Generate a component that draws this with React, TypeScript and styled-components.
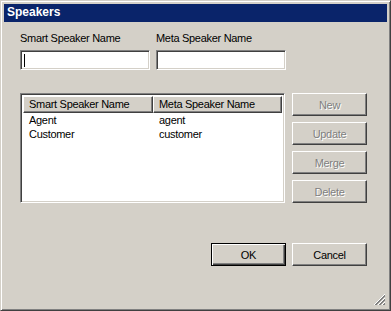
import styled, { createGlobalStyle } from 'styled-components'

const FACE = '#d4d0c8'
const SHADOW = '#808080'
const DARK = '#404040'

interface Speaker {
  smart: string
  meta: string
}

const SPEAKERS: Speaker[] = [
  { smart: 'Agent', meta: 'agent' },
  { smart: 'Customer', meta: 'customer' },
]

const SIDE_ACTIONS = ['New', 'Update', 'Merge', 'Delete']

const GlobalStyle = createGlobalStyle`
  html, body {
    margin: 0;
    padding: 0;
    background: ${FACE};
  }
  * {
    box-sizing: border-box;
  }
`

function ResizeGrip() {
  return (
    <Grip width="12" height="12" viewBox="0 0 12 12" shapeRendering="crispEdges">
      {[0, 4, 8].map((o) => (
        <g key={o}>
          <line x1={o + 1} y1="12" x2="12" y2={o + 1} stroke="#fff" strokeWidth="1" />
          <line x1={o + 2} y1="12" x2="12" y2={o + 2} stroke={SHADOW} strokeWidth="1" />
          <line x1={o + 3} y1="12" x2="12" y2={o + 3} stroke={SHADOW} strokeWidth="1" />
        </g>
      ))}
    </Grip>
  )
}

function App() {
  return (
    <>
      <GlobalStyle />
      <Window>
        <TitleBar>Speakers</TitleBar>
        <Body>
          <FieldsRow>
            <Field>
              <FieldLabel htmlFor="smartName">Smart Speaker Name</FieldLabel>
              <TextBox id="smartName">
                <Caret />
              </TextBox>
            </Field>
            <Field>
              <FieldLabel htmlFor="metaName">Meta Speaker Name</FieldLabel>
              <TextBox id="metaName" />
            </Field>
          </FieldsRow>

          <ListRow>
            <ListView>
              <HeaderRow>
                <HeaderCell $width={130}>Smart Speaker Name</HeaderCell>
                <HeaderCell>Meta Speaker Name</HeaderCell>
              </HeaderRow>
              {SPEAKERS.map((s) => (
                <ItemRow key={s.smart}>
                  <ItemCell $width={130}>{s.smart}</ItemCell>
                  <ItemCell>{s.meta}</ItemCell>
                </ItemRow>
              ))}
            </ListView>
            <SideButtons>
              {SIDE_ACTIONS.map((a) => (
                <Button key={a} disabled>
                  {a}
                </Button>
              ))}
            </SideButtons>
          </ListRow>

          <DialogButtons>
            <Button $default>OK</Button>
            <Button>Cancel</Button>
          </DialogButtons>
        </Body>
        <ResizeGrip />
      </Window>
    </>
  )
}

export default App

const Window = styled.div`
  position: relative;
  width: 391px;
  height: 311px;
  display: flex;
  flex-direction: column;
  padding: 3px;
  background: ${FACE};
  border-top: 1px solid ${FACE};
  border-left: 1px solid ${FACE};
  border-right: 1px solid ${DARK};
  border-bottom: 1px solid ${DARK};
  box-shadow: inset 1px 1px #fff, inset -1px -1px ${SHADOW};
  font-family: 'Liberation Sans', Arial, sans-serif;
  font-size: 11px;
  letter-spacing: -0.3px;
  color: #000;
`

const TitleBar = styled.div`
  height: 18px;
  padding-left: 3px;
  background: #0a246a;
  color: #fff;
  font-weight: bold;
  font-size: 12px;
  letter-spacing: 0;
  line-height: 17px;
`

const Body = styled.div`
  flex: 1;
  display: flex;
  flex-direction: column;
  padding: 10px 20px 0 16px;
`

const FieldsRow = styled.div`
  display: flex;
  gap: 6px;
`

const Field = styled.div`
  display: flex;
  flex-direction: column;
  gap: 5px;
  width: 130px;
`

const FieldLabel = styled.label`
  line-height: 13px;
  height: 13px;
  white-space: nowrap;
`

const sunken = `
  background: #fff;
  border-top: 1px solid ${SHADOW};
  border-left: 1px solid ${SHADOW};
  border-right: 1px solid #fff;
  border-bottom: 1px solid #fff;
  box-shadow: inset 1px 1px ${DARK}, inset -1px -1px ${FACE};
`

const TextBox = styled.div`
  ${sunken}
  height: 20px;
  padding: 3px 0 0 3px;
`

const Caret = styled.span`
  display: block;
  width: 1px;
  height: 13px;
  background: #000;
`

const ListRow = styled.div`
  display: flex;
  gap: 7px;
  margin-top: 23px;
`

const ListView = styled.div`
  ${sunken}
  width: 265px;
  height: 110px;
  padding: 2px;
`

const HeaderRow = styled.div`
  display: flex;
  height: 17px;
`

const HeaderCell = styled.div<{ $width?: number }>`
  ${({ $width }) => ($width ? `width: ${$width}px;` : 'flex: 1;')}
  background: ${FACE};
  border-top: 1px solid #fff;
  border-left: 1px solid #fff;
  border-right: 1px solid ${DARK};
  border-bottom: 1px solid ${DARK};
  box-shadow: inset -1px -1px ${SHADOW};
  padding-left: 5px;
  line-height: 15px;
  white-space: nowrap;
  overflow: hidden;
`

const ItemRow = styled.div`
  display: flex;
  height: 14px;
  line-height: 14px;
  &:first-of-type {
    margin-top: 1px;
  }
`

const ItemCell = styled.div<{ $width?: number }>`
  ${({ $width }) => ($width ? `width: ${$width}px;` : 'flex: 1;')}
  padding-left: 6px;
  white-space: nowrap;
`

const SideButtons = styled.div`
  display: flex;
  flex-direction: column;
  gap: 6px;
`

const Button = styled.button<{ $default?: boolean }>`
  width: 75px;
  height: 23px;
  padding: 0;
  margin: 0;
  font: inherit;
  letter-spacing: inherit;
  color: #000;
  background: ${FACE};
  border-top: 1px solid #fff;
  border-left: 1px solid #fff;
  border-right: 1px solid ${DARK};
  border-bottom: 1px solid ${DARK};
  box-shadow: inset -1px -1px ${SHADOW};
  outline: ${({ $default }) => ($default ? '1px solid #000' : 'none')};
  outline-offset: 0;
  ${({ $default }) =>
    $default
      ? `
    border-color: #000;
    box-shadow: inset 1px 1px #fff, inset -1px -1px ${DARK}, inset -2px -2px ${SHADOW};
    outline: none;
  `
      : ''}
  &:disabled {
    color: ${SHADOW};
    text-shadow: 1px 1px #fff;
  }
`

const DialogButtons = styled.div`
  display: flex;
  justify-content: flex-end;
  gap: 6px;
  margin-top: 40px;
`

const Grip = styled.svg`
  position: absolute;
  right: 5px;
  bottom: 5px;
  display: block;
`
